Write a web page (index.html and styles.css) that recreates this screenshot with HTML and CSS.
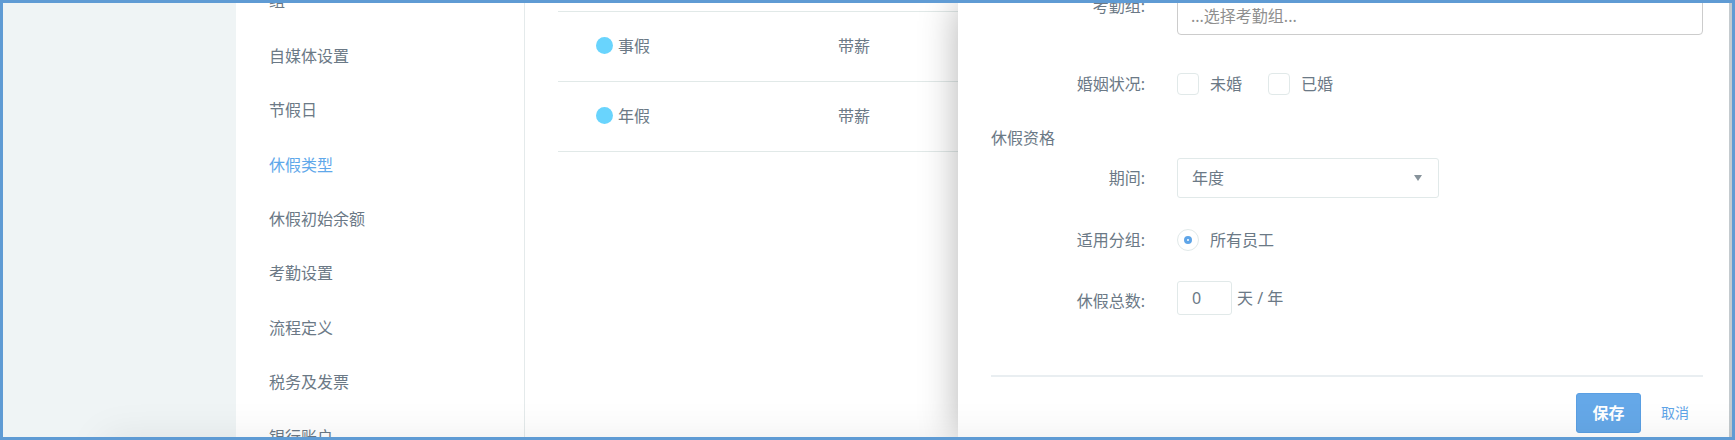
FILE: index.html
```html
<!DOCTYPE html>
<html lang="zh-CN">
<head>
<meta charset="utf-8">
<title>休假类型</title>
<link rel="stylesheet" href="styles.css">
</head>
<body>
<div class="page">
  <div class="rail"></div>
  <nav class="settings-nav">
    <a href="#group">组</a>
    <a href="#media">自媒体设置</a>
    <a href="#holidays">节假日</a>
    <a href="#leave-types" class="active">休假类型</a>
    <a href="#leave-balance">休假初始余额</a>
    <a href="#attendance">考勤设置</a>
    <a href="#workflow">流程定义</a>
    <a href="#tax">税务及发票</a>
    <a href="#bank">银行账户</a>
  </nav>
  <main class="content">
    <table class="leave-table">
      <tbody>
        <tr><td class="name"><span class="dot"></span>事假</td><td>带薪</td></tr>
        <tr><td class="name"><span class="dot"></span>年假</td><td>带薪</td></tr>
      </tbody>
    </table>
  </main>
  <aside class="drawer">
    <form class="form">
      <div class="row">
        <label class="label" for="group">考勤组:</label>
        <input class="group-input" id="group" type="text" placeholder="...选择考勤组...">
      </div>
      <div class="row row-marital" role="group" aria-labelledby="marital">
        <span class="label" id="marital">婚姻状况:</span>
        <div class="options">
          <label class="option"><input class="check" type="checkbox"><span>未婚</span></label>
          <label class="option"><input class="check" type="checkbox"><span>已婚</span></label>
        </div>
      </div>
      <h2 class="section-title">休假资格</h2>
      <div class="row row-period">
        <label class="label" for="period">期间:</label>
        <div class="select-box">
          <select id="period"><option>年度</option></select>
          <svg class="caret" viewBox="0 0 8 6" width="8" height="6" aria-hidden="true"><path d="M0 0h8L4 6z"/></svg>
        </div>
      </div>
      <div class="row row-scope" role="radiogroup" aria-labelledby="scope">
        <span class="label" id="scope">适用分组:</span>
        <div class="options">
          <label class="option"><input class="radio" type="radio" name="scope" checked><span>所有员工</span></label>
        </div>
      </div>
      <div class="row row-total">
        <label class="label" for="total">休假总数:</label>
        <div class="amount">
          <input class="total-input" id="total" type="text" value="0">
          <span>天 / 年</span>
        </div>
      </div>
      <div class="actions">
        <button class="save" type="submit">保存</button>
        <a class="cancel" href="#cancel">取消</a>
      </div>
    </form>
  </aside>
  <div class="bottom-shade"></div>
</div>
</body>
</html>
```
FILE: styles.css
```css
*,
*::before {
  box-sizing: border-box;
}

body {
  margin: 0;
  color: #6b7986;
  font: 16px/22px "Noto Sans", "Noto Sans CJK SC", sans-serif;
}

a {
  color: inherit;
  text-decoration: none;
}

input,
select,
button {
  margin: 0;
  color: inherit;
  font: inherit;
}

.page {
  position: relative;
  display: flex;
  height: 100vh;
  overflow: hidden;
  border: 3px solid #5f9bd4;
  background: #fff;
}

.rail {
  flex: none;
  width: 233px;
  background: #eff4f5;
}

.settings-nav {
  flex: none;
  display: grid;
  grid-auto-rows: 1fr;
  align-items: center;
  width: 289px;
  margin: -29px 0 -27px;
  padding-left: 33px;
  border-right: 1px solid #e4eaeb;
}

.settings-nav .active {
  color: #5fa8ea;
}

.content {
  flex: 1;
  padding: 8px 33px 0;
}

.leave-table {
  width: 100%;
  border-collapse: collapse;
  border-top: 1px solid #e1e9e8;
}

.leave-table td {
  height: 70px;
  padding: 0 0 1px;
  border-bottom: 1px solid #e1e9e8;
}

.leave-table .name {
  width: 280px;
  padding-left: 38px;
}

.dot {
  display: inline-block;
  width: 17px;
  height: 17px;
  margin-right: 5px;
  border-radius: 50%;
  background: #69d4fd;
  vertical-align: -2px;
}

.drawer {
  position: absolute;
  top: 0;
  right: 0;
  bottom: 0;
  width: 774px;
  max-width: 100%;
  padding: 0 26px 0 33px;
  border-right: 3px solid #c4cbcf;
  background: #fff;
  box-shadow: 0 0 36px rgba(0, 0, 0, 0.3);
}

.form {
  margin-top: -8px;
}

.row {
  display: grid;
  grid-template-columns: 154px 1fr;
  column-gap: 32px;
}

.label {
  text-align: right;
}

.group-input {
  width: 100%;
  height: 40px;
  padding: 2px 13px 0;
  border: 1px solid #ccc;
  border-radius: 4px;
  background: #fff;
}

.group-input::placeholder {
  color: #8f8f8f;
  opacity: 1;
}

.row-marital {
  margin-top: 38px;
}

.options {
  display: flex;
  gap: 26px;
}

.option {
  display: flex;
  gap: 11px;
}

.check,
.radio {
  appearance: none;
  width: 22px;
  height: 22px;
  border: 1px solid #e1e9e9;
  border-radius: 4px;
  background: #fff;
}

.radio {
  display: grid;
  place-items: center;
  border-radius: 50%;
}

.radio:checked::before {
  content: "";
  width: 8px;
  height: 8px;
  border: 3px solid #5fa5e8;
  border-radius: 50%;
}

.section-title {
  margin: 32px 0 9px;
  font-size: 16px;
  font-weight: 400;
}

.row-period {
  align-items: center;
}

.select-box {
  display: grid;
  align-items: center;
  width: 262px;
}

.select-box select {
  grid-area: 1 / 1;
  height: 40px;
  padding: 0 14px;
  appearance: none;
  border: 1px solid #e1e9e9;
  border-radius: 3px;
  background: #fff;
}

.caret {
  grid-area: 1 / 1;
  justify-self: end;
  margin-right: 17px;
  fill: #87939b;
  pointer-events: none;
}

.row-scope {
  margin-top: 31px;
}

.row-total {
  align-items: center;
  margin-top: 30px;
}

.row-total .label {
  padding-top: 6px;
}

.amount {
  display: flex;
  align-items: center;
  gap: 5px;
}

.total-input {
  width: 55px;
  height: 34px;
  padding: 0 14px;
  border: 1px solid #e1e9e9;
  border-radius: 3px;
  background: #fff;
}

.actions {
  display: flex;
  justify-content: flex-end;
  align-items: center;
  gap: 20px;
  margin-top: 60px;
  padding: 16px 14px 0 0;
  border-top: 2px solid #e9eef1;
}

.save {
  width: 65px;
  height: 40px;
  padding: 0;
  border: 1px solid #5a9fe3;
  border-radius: 3px;
  background: #65a8e8;
  color: #fff;
  font-weight: 700;
}

.cancel {
  color: #5fa5e8;
  font-size: 14px;
}

.bottom-shade {
  position: absolute;
  top: 100%;
  left: 100px;
  right: -60px;
  height: 40px;
  box-shadow: 0 0 40px rgba(0, 0, 0, 0.08);
  pointer-events: none;
}
```
